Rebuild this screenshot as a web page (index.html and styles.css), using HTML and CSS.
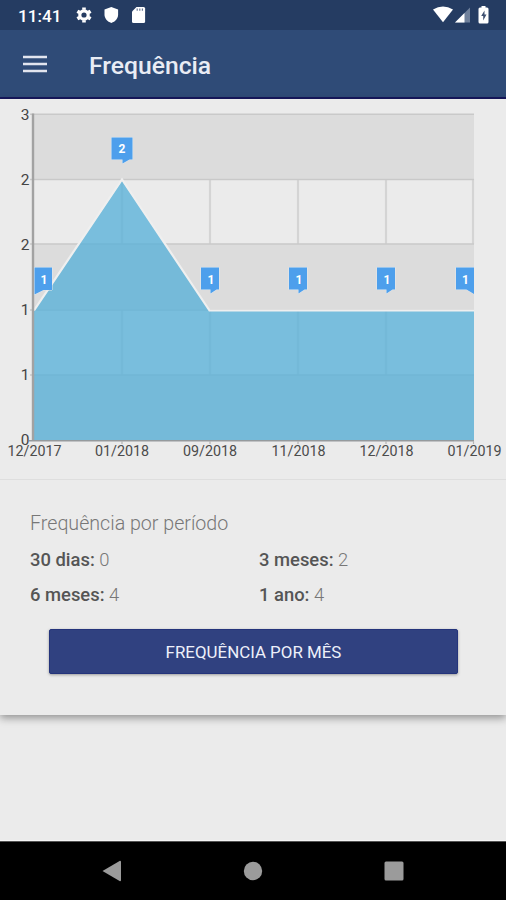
FILE: index.html
```html
<!DOCTYPE html>
<html lang="pt-BR">
<head>
    <meta charset="UTF-8">
    <meta name="viewport" content="width=device-width, initial-scale=1.0">
    <title>Frequência</title>
    <link rel="stylesheet" href="styles.css">
</head>
<body>
    <div class="status">
        <span class="status__time">11:41</span>
        <svg class="status__icons" width="76" height="20" viewBox="0 0 76 20">
            <g fill="none" stroke="#fff">
                <circle cx="8" cy="10" r="4.2" stroke-width="3.2"/>
                <path stroke-width="3.6" d="M8 2.4v2.4M8 15.2v2.4M1.4 6.2l2.1 1.2M12.5 12.6l2.1 1.2M1.4 13.8l2.1-1.2M12.5 7.4l2.1-1.2"/>
            </g>
            <path fill="#fff" d="M35.3 2l6.8 2.5v5.3c0 3.6-2.8 6.9-6.8 8.2-4-1.3-6.8-4.6-6.8-8.2V4.5z"/>
            <path fill="#fff" d="M60.5 2h7.1q1.500 0 1.500 1.500v13q0 1.500-1.500 1.500H57.500q-1.500 0-1.500-1.500V6.500z"/>
            <path stroke="#6b7b96" stroke-width="1.200" d="M61.200 3.600v2.200M63.800 3.600v2.200M66.400 3.600v2.200"/>
        </svg>
        <svg class="status__signal" width="60" height="20" viewBox="0 0 60 20">
            <path fill="#fff" d="M2 4.500Q12 -1.500 22 4.500L12 17.200z"/>
            <path fill="#6f809b" d="M39 2.500v15H24z"/>
            <path fill="#fff" d="M33.500 8v9.500H24z"/>
            <path fill="#fff" d="M50.500 1h4v1.500h1.500q1.500 0 1.500 1.500V17q0 1.500-1.500 1.500h-7q-1.500 0-1.500-1.500V4q0-1.500 1.500-1.500h1.500z"/>
            <path fill="#3d4f70" d="M53.500 5.500l-3.300 5.500h2v4.500l3.300-6h-2z"/>
        </svg>
    </div>
    <header class="toolbar">
        <svg width="24" height="18" viewBox="0 0 24 18">
            <path stroke="#e2e5ef" stroke-width="2.600" d="M0 2h24M0 9h24M0 16h24"/>
        </svg>
        <h1 class="toolbar__title">Frequência</h1>
    </header>
    <main class="content">
        <section class="card">
            <svg class="chart" width="506" height="380" viewBox="0 0 506 380">
                <defs>
                    <clipPath id="plot"><path d="M34 0h440v342H34z"/></clipPath>
                </defs>
                <!-- bands -->
                <path fill="#dcdcdc" d="M34 15h440v65.500H34zM34 145h440v65.500H34zM34 276h440v65H34z"/>
                <!-- grid -->
                <path fill="none" stroke="#d4d4d4" stroke-width="2.200" d="M122 80v65M210 80v65M298 80v65M386 80v65M473 80v65M122 211v65M210 211v65M298 211v65M386 211v65"/>
                <path fill="none" stroke="#c9c9c9" stroke-width="1.500" d="M30 15.200h444M30 80.500h444M30 145h444M30 211h444M30 276h444"/>
                <!-- area -->
                <g clip-path="url(#plot)">
                    <path fill="#59b1d8" fill-opacity=".78" d="M34 212L122 81.500l88 130.500h264v129.500H34z"/>
                    <path fill="none" stroke="#efefef" stroke-width="2.200" d="M34 211.500L122 80.500l87.500 131H474"/>
                </g>
                <path stroke="#a2a2a2" stroke-width="2.400" d="M33 14.500V342"/>
                <path fill="none" stroke="#959a9d" stroke-width="1.600" d="M29 341.700h445"/>
                <path stroke="#b5b5b5" stroke-width="1.200" d="M122 342v3M210 342v3M298 342v3M386 342v3M473.500 342v3"/>
                <!-- markers -->
                <g class="chart__markers" clip-path="url(#plot)">
                    <path d="M34.500 168.500h17.500v22.500h-8.500l-9 4.500z"/>
                    <path d="M111.500 38.500h21v22h-3l-7 4v-4h-11z"/>
                    <path d="M201 168.500h18v22h-2.500l-6 4v-4H201z"/>
                    <path d="M289 168.500h18v22h-2.500l-6 4v-4H289z"/>
                    <path d="M377 168.500h18v22h-2.500l-6 4v-4H377z"/>
                    <path d="M456 168.500h19v27l-8.500-5H456z"/>
                </g>
                <g class="chart__values">
                    <text x="44" y="184.500">1</text>
                    <text x="122" y="54">2</text>
                    <text x="211" y="184.500">1</text>
                    <text x="299" y="184.500">1</text>
                    <text x="387" y="184.500">1</text>
                    <text x="465.500" y="184.500">1</text>
                </g>
                <g class="chart__scale">
                    <text x="29.500" y="20.500">3</text>
                    <text x="29.500" y="85.500">2</text>
                    <text x="29.500" y="150.500">2</text>
                    <text x="29.500" y="216">1</text>
                    <text x="29.500" y="281">1</text>
                    <text x="29.500" y="346">0</text>
                </g>
                <g class="chart__months">
                    <text x="34.500" y="357">12/2017</text>
                    <text x="122" y="357">01/2018</text>
                    <text x="210" y="357">09/2018</text>
                    <text x="298.500" y="357">11/2018</text>
                    <text x="386.500" y="357">12/2018</text>
                    <text x="474.500" y="357">01/2019</text>
                </g>
            </svg>
            <div class="summary">
                <h2 class="summary__title">Frequência por período</h2>
                <div class="summary__grid">
                    <div><b>30 dias:</b> 0</div>
                    <div><b>3 meses:</b> 2</div>
                    <div><b>6 meses:</b> 4</div>
                    <div><b>1 ano:</b> 4</div>
                </div>
                <button class="button">FREQUÊNCIA POR MÊS</button>
            </div>
        </section>
    </main>
    <nav class="navbar">
        <svg width="20" height="22" viewBox="0 0 20 22"><path fill="#9b9b9b" d="M.5 11L18 .8q1 0 1 1v18.400q0 1-1 1z"/></svg>
        <svg width="20" height="20" viewBox="0 0 20 20"><circle cx="10" cy="10" r="9.200" fill="#9b9b9b"/></svg>
        <svg width="20" height="20" viewBox="0 0 20 20"><rect x=".5" y=".5" width="19" height="19" rx="1.500" fill="#9b9b9b"/></svg>
    </nav>
</body>
</html>
```
FILE: styles.css
```css
* {
    box-sizing: border-box;
}
body {
    display: flex;
    flex-direction: column;
    height: 900px;
    margin: 0;
    overflow: hidden;
    background-color: #ebebeb;
    font-family: Roboto, "Liberation Sans", sans-serif;
}
svg {
    display: block;
    flex: none;
}

.status {
    display: flex;
    align-items: center;
    height: 30px;
    padding: 0 15px 0 18px;
    background-color: #253c62;
    color: #fff;
}
.status__time {
    width: 58px;
    padding-top: 1px;
    font-size: 17.2px;
    font-weight: 500;
}
.status__signal {
    margin-left: auto;
}

.toolbar {
    display: flex;
    align-items: center;
    gap: 42px;
    height: 69px;
    padding: 1px 23px 0;
    border-bottom: 2px solid #17185e;
    background-color: #2f4b77;
}
.toolbar__title {
    margin: 2px 0 0;
    color: #e9ecf4;
    font-size: 24.7px;
    font-weight: 500;
}

.content {
    flex: 1;
    border-bottom: 1px solid #f6f6f6;
}
.card {
    height: 616px;
    background-color: #ebebeb;
    box-shadow: 0 3px 8px rgba(0, 0, 0, .38);
}
.chart {
    box-sizing: content-box;
    border-bottom: 1px solid #dedede;
}
.chart__markers {
    fill: #4d9fec;
    stroke: #e3eaf0;
    stroke-width: 1px;
    paint-order: stroke;
}
.chart__values {
    fill: #fff;
    font-size: 12px;
    font-weight: 700;
    text-anchor: middle;
}
.chart__scale {
    fill: #444;
    font-size: 15.5px;
    text-anchor: end;
}
.chart__months {
    fill: #4c4c4c;
    font-size: 14.3px;
    text-anchor: middle;
}

.summary {
    padding: 30px 30px 0;
    color: #777;
}
.summary__title {
    margin: 0 0 10px;
    font-size: 19.65px;
    font-weight: 300;
    line-height: 28px;
}
.summary__grid {
    display: grid;
    grid-template-columns: 229px 1fr;
    row-gap: 11px;
    font-size: 18.4px;
    font-weight: 300;
    line-height: 24px;
}
.summary__grid b {
    color: #555;
    font-weight: 500;
}
.button {
    display: block;
    width: 409px;
    height: 45px;
    margin: 22px 0 0 19px;
    padding: 1px 0 0;
    border: 1px solid #24347b;
    border-radius: 2px;
    background-color: #304180;
    box-shadow: 0 1px 3px rgba(0, 0, 0, .35);
    color: #edf0fa;
    font: 400 16.9px/42px Roboto, "Liberation Sans", sans-serif;
}

.navbar {
    display: flex;
    align-items: center;
    justify-content: center;
    gap: 121px;
    height: 59px;
    padding-bottom: 1px;
    border-top: 1px solid #555;
    background-color: #000;
}
```
